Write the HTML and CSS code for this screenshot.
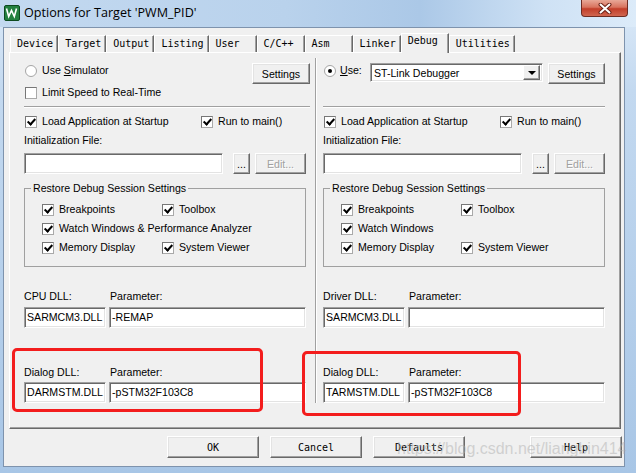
FILE: index.html
```html
<!DOCTYPE html>
<html>
  <head>
    <meta charset="utf-8">
    <link rel="stylesheet" href="styles.css">
  </head>
  <body>
    <div class="window">
      <div class="titlebar">
        <svg class="app-icon" viewBox="0 0 16 16">
          <rect x="0.5" y="0.5" width="15" height="15" rx="1.5" fill="#23803f" stroke="#0d4a1f"/>
          <path d="M2.5 3.5l2.2 8 2.8-6 2.8 6 2.2-8" fill="none" stroke="#fff" stroke-width="1.6"/>
        </svg>
        <span class="title">Options for Target 'PWM_PID'</span>
        <div class="close">
          <svg width="14" height="11" viewBox="0 0 14 11">
            <path d="M2.5 1.5l9 8M11.5 1.5l-9 8" stroke="#6b2116" stroke-width="4" stroke-linecap="round"/>
            <path d="M2.5 1.5l9 8M11.5 1.5l-9 8" stroke="#fff" stroke-width="2" stroke-linecap="round"/>
          </svg>
        </div>
      </div>

      <div class="client">
        <div class="tabs">
          <div class="tab">Device</div>
          <div class="tab">Target</div>
          <div class="tab">Output</div>
          <div class="tab">Listing</div>
          <div class="tab">User</div>
          <div class="tab">C/C++</div>
          <div class="tab">Asm</div>
          <div class="tab">Linker</div>
          <div class="tab tab--active">Debug</div>
          <div class="tab">Utilities</div>
        </div>

        <div class="panel">
          <!-- simulator side -->
          <div class="col">
            <div class="row-top">
              <label class="opt opt--top"><span class="rb"></span><span>Use <u>S</u>imulator</span></label>
              <div class="btn btn--settings">Settings</div>
            </div>
            <div class="row-check">
              <label class="opt"><span class="cb"></span>Limit Speed to Real-Time</label>
            </div>
            <div class="sep"></div>
            <div class="row-load">
              <label class="opt"><span class="cb on"></span>Load Application at Startup</label>
              <label class="opt"><span class="cb on"></span>Run to main()</label>
            </div>
            <div class="init-label">Initialization File:</div>
            <div class="init-row">
              <div class="field field--init"></div>
              <div class="btn btn--dots">...</div>
              <div class="btn btn--edit">Edit...</div>
            </div>
            <fieldset class="group">
              <legend>Restore Debug Session Settings</legend>
              <div class="group__checks">
                <label class="opt"><span class="cb on"></span>Breakpoints</label>
                <label class="opt"><span class="cb on"></span>Toolbox</label>
                <label class="opt opt--wide"><span class="cb on"></span>Watch Windows &amp; Performance Analyzer</label>
                <label class="opt"><span class="cb on"></span>Memory Display</label>
                <label class="opt"><span class="cb on"></span>System Viewer</label>
              </div>
            </fieldset>
            <div class="dll">
              <div class="dll__label">CPU DLL:</div>
              <div class="dll__label">Parameter:</div>
              <div class="field">SARMCM3.DLL</div>
              <div class="field">-REMAP</div>
            </div>
            <div class="dll dll--dialog">
              <div class="dll__label">Dialog DLL:</div>
              <div class="dll__label">Parameter:</div>
              <div class="field">DARMSTM.DLL</div>
              <div class="field">-pSTM32F103C8</div>
            </div>
          </div>

          <div class="divider"></div>

          <!-- target side -->
          <div class="col">
            <div class="row-top">
              <label class="opt opt--top opt--use"><span class="rb on"></span><span><u>U</u>se:</span></label>
              <div class="select">
                <span>ST-Link Debugger</span>
                <span class="select__btn"><span class="arrow"></span></span>
              </div>
              <div class="btn btn--settings-r">Settings</div>
            </div>
            <div class="row-check"></div>
            <div class="sep"></div>
            <div class="row-load">
              <label class="opt"><span class="cb on"></span>Load Application at Startup</label>
              <label class="opt"><span class="cb on"></span>Run to main()</label>
            </div>
            <div class="init-label">Initialization File:</div>
            <div class="init-row">
              <div class="field field--init"></div>
              <div class="btn btn--dots">...</div>
              <div class="btn btn--edit">Edit...</div>
            </div>
            <fieldset class="group">
              <legend>Restore Debug Session Settings</legend>
              <div class="group__checks">
                <label class="opt"><span class="cb on"></span>Breakpoints</label>
                <label class="opt"><span class="cb on"></span>Toolbox</label>
                <label class="opt opt--wide"><span class="cb on"></span>Watch Windows</label>
                <label class="opt"><span class="cb on"></span>Memory Display</label>
                <label class="opt"><span class="cb on"></span>System Viewer</label>
              </div>
            </fieldset>
            <div class="dll">
              <div class="dll__label">Driver DLL:</div>
              <div class="dll__label">Parameter:</div>
              <div class="field">SARMCM3.DLL</div>
              <div class="field"></div>
            </div>
            <div class="dll dll--dialog">
              <div class="dll__label">Dialog DLL:</div>
              <div class="dll__label">Parameter:</div>
              <div class="field">TARMSTM.DLL</div>
              <div class="field">-pSTM32F103C8</div>
            </div>
          </div>
        </div>

        <div class="actions">
          <div class="btn btn--action">OK</div>
          <div class="btn btn--action">Cancel</div>
          <div class="btn btn--action">Defaults</div>
          <div class="btn btn--action btn--help">Help</div>
        </div>
      </div>

      <div class="mark mark--left"></div>
      <div class="mark mark--right"></div>
      <div class="watermark">https://blog.csdn.net/liangbin414</div>
    </div>
  </body>
</html>
```

FILE: styles.css
```css
* {
  box-sizing: border-box;
}
body {
  margin: 0;
  font-family: "Liberation Sans", Arial, sans-serif;
  font-size: 10.6px;
  color: #000;
}

.window {
  position: relative;
  width: 636px;
  height: 473px;
  overflow: hidden;
  background: linear-gradient(180deg, #dceaf8 0, #c3d9f0 90px, #a8c6e6 100%);
}

/* title bar */
.titlebar {
  height: 27px;
  display: flex;
  align-items: flex-start;
  background: linear-gradient(90deg, #c3d9f0 0%, #b9d2ec 45%, #abc8e7 66%, #cfe2f5 86%, #dcebf9 100%);
}
.app-icon {
  width: 16px;
  height: 16px;
  margin: 5px 0 0 4px;
}
.title {
  font-family: "Open Sans", sans-serif;
  font-size: 12.6px;
  line-height: 16px;
  margin: 5px 0 0 4px;
}
.close {
  margin-left: auto;
  margin-right: 8px;
  width: 47px;
  height: 17px;
  display: flex;
  align-items: center;
  justify-content: center;
  border: 1px solid #6e2c22;
  border-top: none;
  border-radius: 0 0 4px 4px;
  background: linear-gradient(180deg, #e8a897 0%, #d8735e 45%, #c23e29 55%, #d06650 100%);
}

/* client area */
.client {
  margin-left: 3px;
  width: 622px;
  height: 440px;
  border: 1px solid #7e93ad;
  background: #f0f0f0;
  padding: 5px 0 0 5px;
}

.tabs {
  display: flex;
  align-items: flex-end;
  margin-left: 1px;
  font-family: "DejaVu Sans Mono", monospace;
  font-size: 10px;
}
.tab {
  height: 17px;
  min-width: 48px;
  padding: 0 4px 0 6px;
  line-height: 15px;
  white-space: nowrap;
  border-top: 1px solid #fff;
  border-left: 1px solid #fff;
  border-right: 1px solid #696969;
  box-shadow: inset -1px 0 #a0a0a0;
  background: #f0f0f0;
}
.tab--active {
  position: relative;
  z-index: 1;
  height: 20px;
  margin-bottom: -1px;
  line-height: 14px;
}

.panel {
  width: 612px;
  height: 377px;
  display: flex;
  padding: 10px 0 0 14px;
  border: 1px solid;
  border-color: #fff #696969 #696969 #fff;
  box-shadow: inset -1px -1px #a0a0a0;
}
.col {
  width: 282px;
  display: flex;
  flex-direction: column;
}
.col:first-child {
  width: 286px;
}
.divider {
  width: 2px;
  height: 345px;
  margin: -5px 0 0 5px;
  border-left: 1px solid #a0a0a0;
  border-right: 1px solid #fff;
}
.divider + .col {
  margin-left: 6px;
}

/* options */
.opt {
  display: flex;
  align-items: center;
  gap: 5px;
  height: 13px;
  line-height: 13px;
  white-space: nowrap;
}
.opt--top {
  margin: 1px 0 0 1px;
}
.opt--use {
  width: 46px;
  gap: 4px;
}
.cb {
  flex: none;
  width: 12px;
  height: 12px;
  margin-left: 1px;
  background: #fff;
  border: 1px solid #8a8a8a;
  border-color: #777 #a9a9a9 #a9a9a9 #777;
}
.cb.on::after {
  content: "";
  display: block;
  width: 3px;
  height: 6px;
  margin: 0 0 0 3px;
  border: solid #000;
  border-width: 0 2px 2px 0;
  transform: rotate(42deg);
}
.rb {
  flex: none;
  width: 12px;
  height: 12px;
  border-radius: 50%;
  background: #fff;
  border: 1px solid #a5a5a5;
  display: flex;
  align-items: center;
  justify-content: center;
}
.rb.on::after {
  content: "";
  width: 4px;
  height: 4px;
  border-radius: 50%;
  background: #000;
}

.row-top {
  height: 21px;
  display: flex;
  align-items: flex-start;
}
.row-check {
  margin-top: 2px;
  height: 13px;
}
.sep {
  margin-top: 7px;
  height: 2px;
  border-top: 1px solid #a0a0a0;
  border-bottom: 1px solid #fff;
}
.row-load {
  margin-top: 7px;
  display: grid;
  grid-template-columns: 176px auto;
}
.init-label {
  margin-top: 6px;
  line-height: 13px;
}
.init-row {
  margin-top: 6px;
  height: 21px;
  display: flex;
}

/* controls */
.btn {
  height: 21px;
  display: flex;
  align-items: center;
  justify-content: center;
  background: #f0f0f0;
  border: 1px solid;
  border-color: #fff #696969 #696969 #fff;
  box-shadow: inset -1px -1px #a0a0a0, inset 1px 1px #e3e3e3;
  white-space: nowrap;
}
.btn--settings {
  width: 58px;
  margin-left: auto;
}
.btn--settings-r {
  width: 57px;
  margin-left: 5px;
}
.btn--dots {
  width: 17px;
  margin-left: 10px;
  align-items: flex-end;
  padding-bottom: 3px;
}
.btn--edit {
  width: 51px;
  margin-left: 5px;
  color: #a0a0a0;
  text-shadow: 1px 1px #fff;
}

.field {
  height: 21px;
  padding-left: 2px;
  line-height: 19px;
  white-space: nowrap;
  overflow: hidden;
  background: #fff;
  border: 1px solid;
  border-color: #a0a0a0 #fff #fff #a0a0a0;
  box-shadow: inset 1px 1px #696969, inset -1px -1px #e3e3e3;
}
.field--init {
  width: 199px;
}

.select {
  width: 173px;
  height: 19px;
  display: flex;
  align-items: center;
  padding-left: 3px;
  background: #fff;
  border: 1px solid;
  border-color: #a0a0a0 #fff #fff #a0a0a0;
  box-shadow: inset 1px 1px #696969, inset -1px -1px #e3e3e3;
}
.select__btn {
  margin-left: auto;
  margin-right: 2px;
  width: 17px;
  height: 15px;
  display: flex;
  align-items: center;
  justify-content: center;
  background: #f0f0f0;
  border: 1px solid;
  border-color: #fff #696969 #696969 #fff;
  box-shadow: inset -1px -1px #a0a0a0;
}
.arrow {
  width: 0;
  height: 0;
  border-left: 4px solid transparent;
  border-right: 4px solid transparent;
  border-top: 4px solid #000;
}

/* restore settings group */
.group {
  width: 282px;
  margin: 8px 0 0;
  padding: 8px 6px 12px;
  border: 1px solid #a0a0a0;
}
.group legend {
  padding: 0 2px;
  line-height: 13px;
}
.group__checks {
  margin-left: 10px;
  display: grid;
  grid-template-columns: 120px auto;
  row-gap: 6px;
}
.opt--wide {
  grid-column: span 2;
}

/* dll boxes */
.dll {
  margin-top: 23px;
  display: grid;
  grid-template-columns: 82px 197px;
  column-gap: 3px;
  row-gap: 4px;
}
.dll--dialog {
  margin-top: 38px;
  row-gap: 3px;
}
.dll__label {
  line-height: 13px;
  white-space: nowrap;
}
.dll__label:nth-child(2) {
  padding-left: 1px;
}

/* dialog buttons */
.actions {
  width: 613px;
  margin-top: 7px;
  padding-left: 158px;
  display: flex;
  gap: 11px;
  font-family: "DejaVu Sans Mono", monospace;
  font-size: 10px;
}
.btn--action {
  width: 92px;
  height: 22px;
}
.btn--help {
  margin-left: auto;
}

/* annotations drawn over the screenshot */
.mark {
  position: absolute;
  border: 3px solid #f31d1d;
  border-radius: 5px;
}
.mark--left {
  left: 12px;
  top: 348px;
  width: 251px;
  height: 64px;
}
.mark--right {
  left: 302px;
  top: 351px;
  width: 219px;
  height: 65px;
}
.watermark {
  position: absolute;
  left: 397px;
  top: 440px;
  font-family: "Liberation Sans", Arial, sans-serif;
  font-size: 16px;
  line-height: 18px;
  color: rgba(175, 175, 175, 0.5);
  white-space: nowrap;
}
```
